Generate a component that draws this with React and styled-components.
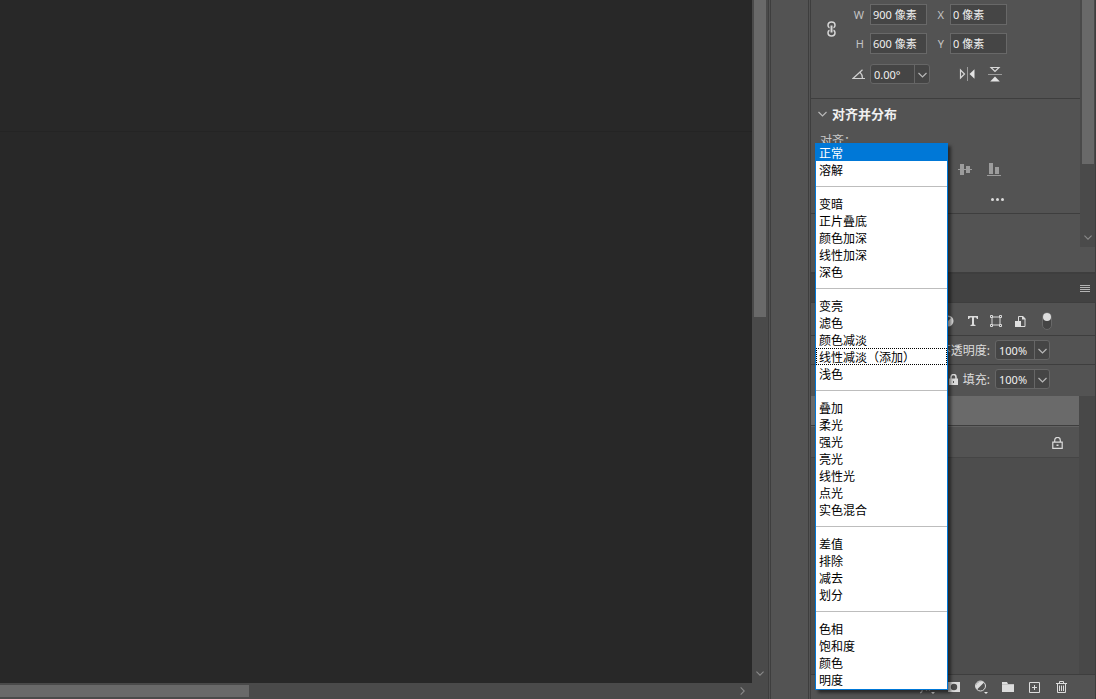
import React from 'react';
import styled, { createGlobalStyle, css } from 'styled-components';

const GlobalStyle = createGlobalStyle`
  * {
    box-sizing: border-box;
  }

  body {
    margin: 0;
    background: #535353;
    color: #dcdcdc;
    font-family: 'Noto Sans', 'Noto Sans CJK SC', sans-serif;
    font-size: 12px;
    overflow: hidden;
  }

  button,
  input,
  select {
    margin: 0;
    font-family: inherit;
    color: inherit;
  }

  svg {
    display: block;
    flex: none;
  }
`;

const Workspace = styled.main`
  display: flex;
  height: 100vh;
`;

const DocumentArea = styled.section`
  flex: 1;
  min-width: 0;
  display: grid;
  grid-template-columns: 1fr 16px;
  grid-template-rows: 1fr 16px;
  background: #4a4a4a;
`;

const Canvas = styled.div`
  background: #282828;
`;

const CanvasTop = styled.div`
  height: 132px;
  border-bottom: 1px solid #242424;
`;

const VerticalTrack = styled.div`
  display: flex;
  flex-direction: column;
  align-items: center;
  justify-content: space-between;
  width: ${(p) => p.$width};
  height: ${(p) => p.$height};
  padding-bottom: 6px;
  background: #4a4a4a;
`;

const VerticalThumb = styled.div`
  width: 12px;
  height: ${(p) => p.$length};
  background: #696969;
`;

const HorizontalTrack = styled.div`
  display: flex;
  align-items: center;
  justify-content: space-between;
  padding-right: 6px;
`;

const HorizontalThumb = styled.div`
  width: 249px;
  height: 12px;
  background: #696969;
`;

const Dock = styled.div`
  flex: none;
  width: 43px;
  background: #535353;
  border-left: 3px double #3e3e3e;
  border-right: 3px double #3e3e3e;
`;

const SidePanel = styled.aside`
  position: relative;
  flex: none;
  display: flex;
  flex-direction: column;
  width: 285px;
  border-right: 1px solid #3e3e3e;
`;

const Properties = styled.section`
  display: flex;
  height: 274px;
  border-bottom: 2px solid #3e3e3e;
`;

const PropertiesBody = styled.div`
  flex: 1;
`;

const Transform = styled.div`
  padding: 4px 0 14px;
  border-bottom: 1px solid #3e3e3e;
`;

const SizeGrid = styled.div`
  display: grid;
  grid-template-columns: 14px 20px 57px 11px 57px;
  grid-template-rows: 21px 21px;
  gap: 8px 6px;
  align-items: center;
  padding-left: 13px;
  padding-right: 1px;
`;

const LinkButton = styled.button`
  grid-row: 1 / 3;
  display: flex;
  justify-content: center;
  padding: 0;
  border: 0;
  background: none;
`;

const AxisLabel = styled.label`
  text-align: right;
  font-size: 11px;
  color: #c4c4c4;
`;

const Field = styled.input`
  width: 100%;
  height: 21px;
  padding: 0 2px 2px;
  border: 1px solid #686868;
  background: #454545;
  color: #f0f0f0;
  font-size: 11px;
  outline: none;
`;

const AngleRow = styled.div`
  display: flex;
  align-items: center;
  gap: 5px;
  margin-top: 10px;
  padding-left: 41px;
`;

const FlipGroup = styled.div`
  display: flex;
  align-items: center;
  gap: 10px;
  margin-left: 23px;
`;

const IconButton = styled.button`
  display: flex;
  align-items: center;
  justify-content: center;
  width: ${(p) => p.$width || '18px'};
  height: 20px;
  padding: 0;
  border: 0;
  background: none;
`;

const Combo = styled.div`
  display: flex;
  width: ${(p) => p.$width};
  height: 20px;
  border: 1px solid #666;
  border-radius: 3px;
  background: #454545;
`;

const ComboInput = styled.input`
  flex: 1;
  min-width: 0;
  padding: 0 3px;
  border: 0;
  background: none;
  color: #f0f0f0;
  font-size: 11px;
  outline: none;
`;

const ComboButton = styled.button`
  display: flex;
  align-items: center;
  justify-content: center;
  width: 15px;
  padding: 0;
  border: 0;
  border-left: 1px solid #666;
  background: none;
`;

const AlignSection = styled.div`
  padding-bottom: 2px;
  border-bottom: 1px solid #3e3e3e;
`;

const SectionTitle = styled.h2`
  display: flex;
  align-items: center;
  gap: 5px;
  height: 30px;
  margin: 0;
  padding: 0 0 2px 7px;
  font-size: 13px;
  font-weight: 700;
  color: #f0f0f0;
`;

const AlignLabel = styled.div`
  height: 24px;
  padding-left: 9px;
  line-height: 24px;
  color: #c8c8c8;
`;

const AlignRow = styled.div`
  display: flex;
  align-items: center;
  height: 34px;
  padding-left: 23px;
`;

const MoreRow = styled.div`
  display: flex;
  justify-content: flex-end;
  align-items: center;
  height: 24px;
  padding-right: 74px;
`;

const Layers = styled.section`
  flex: 1;
  min-height: 0;
  display: flex;
  flex-direction: column;
`;

const TabBar = styled.div`
  display: flex;
  align-items: center;
  justify-content: flex-end;
  height: 29px;
  padding-top: 2px;
  padding-right: 1px;
  background: #424242;
  border-bottom: 1px solid #3e3e3e;
`;

const OptionRow = styled.div`
  display: flex;
  align-items: center;
  justify-content: flex-end;
  gap: 5px;
  height: ${(p) => p.$height};
  padding: ${(p) => p.$padding};
  ${(p) =>
    p.$ruled &&
    css`
      border-bottom: 1px solid #3e3e3e;
    `}
`;

const LayerArea = styled.div`
  flex: 1;
  display: flex;
  background: #484848;
`;

const LayerList = styled.ul`
  flex: 1;
  margin: 0 16px 0 0;
  padding: 0;
  list-style: none;
  background: #4d4d4d;
`;

const LayerItem = styled.li`
  display: flex;
  align-items: center;
  justify-content: flex-end;
  height: 31px;
  padding: 2px 16px 0 0;
  border-bottom: 1px solid ${(p) => (p.$selected ? '#626262' : '#454545')};
  background: ${(p) => (p.$selected ? '#6a6a6a' : '#535353')};
  box-shadow: ${(p) => (p.$selected ? 'inset 0 -1px #3e3e3e' : 'none')};
`;

const Footer = styled.footer`
  display: flex;
  align-items: center;
  justify-content: flex-end;
  height: 25px;
  padding-right: 20px;
  border-top: 1px solid #3e3e3e;
`;

const BlendList = styled.select`
  position: absolute;
  top: 143px;
  left: 4px;
  width: 133px;
  height: 547px;
  padding: 0;
  border: 1px solid #0078d7;
  border-radius: 0;
  background: #fff;
  color: #000;
  font-family: 'Noto Sans CJK SC', sans-serif;
  font-size: 12px;
  overflow: hidden;
  outline: none;
  box-shadow: 3px 3px 3px rgba(0, 0, 0, 0.5);
`;

const BlendOption = styled.option`
  height: 17px;
  min-height: 17px;
  padding: 0 3px;
  line-height: 17px;
  color: ${(p) => (p.$hovered ? '#fff' : '#000')};
  background: ${(p) => (p.$hovered ? '#0078d7' : '#fff')};
  ${(p) =>
    p.$current &&
    css`
      outline: 1px dotted #000;
      outline-offset: -1px;
    `}
`;

const Separator = styled.option`
  height: 17px;
  min-height: 17px;
  padding: 0;
  background: linear-gradient(#bdbdbd, #bdbdbd) 0 8px / 100% 1px no-repeat;
`;

const blendGroups = [
  ['正常', '溶解'],
  ['变暗', '正片叠底', '颜色加深', '线性加深', '深色'],
  ['变亮', '滤色', '颜色减淡', '线性减淡（添加）', '浅色'],
  ['叠加', '柔光', '强光', '亮光', '线性光', '点光', '实色混合'],
  ['差值', '排除', '减去', '划分'],
  ['色相', '饱和度', '颜色', '明度'],
];

const Chevron = ({ color = '#b8b8b8', size = 9, right }) => (
  <svg width={size} height={size} viewBox="0 0 9 9" fill="none" stroke={color} strokeWidth="1.2">
    <path d={right ? 'M3 .5l4 4-4 4' : 'M.5 3l4 4 4-4'} />
  </svg>
);

const LinkIcon = () => (
  <svg width="9" height="16" viewBox="0 0 9 16" fill="none" stroke="#d8d8d8" strokeWidth="1.5">
    <path d="M2.5 6.7C1.2 6.2 1 5.4 1 4.2 1 2.2 2.3 1 4.5 1S8 2.2 8 4.2c0 1.2-.2 2-1.5 2.5M2.5 9.3C1.2 9.8 1 10.600 1 11.800 1 13.800 2.300 15 4.500 15S8 13.800 8 11.800c0-1.200-.2-2-1.500-2.500" />
    <path d="M4.500 4.500v7" strokeWidth="2" />
  </svg>
);

const AngleIcon = () => (
  <svg width="13" height="11" viewBox="0 0 13 11" fill="none" stroke="#d0d0d0" strokeWidth="1.2">
    <path d="M10.500.8L1 9.500h12M8 3.200c1.700 1.500 2.500 3.500 2.500 6.300" />
  </svg>
);

const FlipIcon = ({ vertical }) => (
  <svg width="16" height="16" viewBox="0 0 16 16">
    <g transform={vertical ? 'rotate(90 8 8)' : undefined}>
      <path d="M1.500 4v8l4-4z" fill="none" stroke="#d8d8d8" strokeWidth="1.200" />
      <path d="M15.500 3.200v9.600L10.500 8z" fill="#e4e4e4" />
      <path d="M8.500 1.500v13" stroke="#e4e4e4" strokeDasharray="1 1" />
    </g>
  </svg>
);

const AlignIcon = ({ kind }) => (
  <svg width="14" height="14" viewBox="0 0 14 14" fill="#9c9c9c">
    {kind === 'middle' && <path d="M2 1h4v5h2V3h4v3h2v1h-2v3H8V7H6v5H2V7H0V6h2z" />}
    {kind === 'bottom' && <path d="M2 0h4v11H2zM8 4h4v7H8zM0 12h14v1H0z" />}
    {kind === 'top' && <path d="M0 0h14v1H0zM2 2h4v11H2zM8 2h4v7H8z" />}
    {kind === 'left' && <path d="M0 0h1v14H0zM2 2h11v4H2zM2 8h7v4H2z" />}
    {kind === 'center' && <path d="M6 0h1v2h5v4H1V2h5zM3 8h7v4H7v2H6v-2H3z" />}
    {kind === 'right' && <path d="M13 0h1v14h-1zM1 2h11v4H1zM5 8h7v4H5z" />}
  </svg>
);

const MoreIcon = () => (
  <svg width="13" height="3" viewBox="0 0 13 3" fill="#dcdcdc">
    <circle cx="1.500" cy="1.500" r="1.500" />
    <circle cx="6.500" cy="1.500" r="1.500" />
    <circle cx="11.500" cy="1.500" r="1.500" />
  </svg>
);

const MenuIcon = () => (
  <svg width="10" height="8" viewBox="0 0 10 8" fill="#b4b4b4">
    <path d="M0 0h10v1H0zM0 2h10v1H0zM0 4h10v1H0zM0 6h10v1H0z" />
  </svg>
);

const HalfCircleIcon = () => (
  <svg width="12" height="12" viewBox="0 0 12 12">
    <circle cx="6" cy="6" r="5.500" fill="#dcdcdc" />
    <path d="M9 3A4.300 4.300 0 0 0 3 9z" fill="#555" />
  </svg>
);

const TypeIcon = () => (
  <svg width="10" height="10" viewBox="0 0 10 10" fill="#dcdcdc">
    <path d="M0 0h10v3H9L8 1.500H6V8.500l1.500.5v1h-5V9L4 8.500v-7H2L1 3H0z" />
  </svg>
);

const ShapeIcon = () => (
  <svg width="12" height="12" viewBox="0 0 12 12" fill="#535353" stroke="#dcdcdc">
    <path d="M2 2h8v8H2z" />
    <path d="M.5.5h2v2h-2zM9.500.5h2v2h-2zM.5 9.500h2v2h-2zM9.500 9.500h2v2h-2z" />
  </svg>
);

const SmartObjectIcon = () => (
  <svg width="11" height="13" viewBox="0 0 11 13">
    <path d="M3.500 6V1.500h4l2.500 2.500v7.500H6" fill="none" stroke="#dcdcdc" />
    <path d="M7 1v3.500h3.500V3.500L8 1z" fill="#dcdcdc" />
    <path d="M0 6h6v6H0z" fill="#e0e0e0" />
  </svg>
);

const FilterToggle = () => (
  <svg width="10" height="18" viewBox="0 0 10 18">
    <rect x=".5" y=".5" width="9" height="17" rx="4.500" fill="#444" stroke="#686868" />
    <circle cx="5" cy="5" r="4" fill="#dedede" />
  </svg>
);

const SolidLockIcon = () => (
  <svg width="9" height="11" viewBox="0 0 9 11">
    <path d="M2 5V3a2.500 2.500 0 0 1 5 0v2" fill="none" stroke="#dcdcdc" strokeWidth="1.500" />
    <path d="M0 4.500h9V11H0z" fill="#dcdcdc" />
    <path d="M4 7h1v2H4z" fill="#555" />
  </svg>
);

const LayerLockIcon = () => (
  <svg width="11" height="12" viewBox="0 0 11 12" fill="none" stroke="#dcdcdc">
    <path d="M2.700 5V3.200a2.800 2.800 0 0 1 5.600 0V5M.8 5.200h9.400v6.100H.8z" strokeWidth="1.200" />
    <path d="M4.500 7.500h2v1.500h-2z" fill="#dcdcdc" stroke="none" />
  </svg>
);

const MaskIcon = () => (
  <svg width="12" height="10" viewBox="0 0 12 10">
    <path d="M0 0h12v10H0z" fill="#dcdcdc" />
    <circle cx="6" cy="5" r="3.200" fill="#4d4d4d" />
  </svg>
);

const EffectsIcon = () => (
  <svg width="18" height="14" viewBox="0 0 18 14" fill="none" stroke="#b4b4b4" strokeWidth="1.300">
    <path d="M8 2C5.500 1 5.500 4 5 6l-1 5c-.3 1.200-1 1.700-2 1.500M3 5h4.500M8 6l4 4.500M12.500 6L8 10.500" />
    <path d="M13 12h4l-2 2z" fill="#e0e0e0" stroke="none" />
  </svg>
);

const AdjustmentIcon = () => (
  <svg width="14" height="16" viewBox="0 0 14 16">
    <circle cx="6.500" cy="7" r="5" fill="#525252" stroke="#dcdcdc" />
    <path d="M3 10.500A5 5 0 0 1 10 3.500z" fill="#dcdcdc" />
    <path d="M10 13h4l-2 2z" fill="#e6e6e6" />
  </svg>
);

const FolderIcon = () => (
  <svg width="12" height="10" viewBox="0 0 12 10" fill="#dcdcdc">
    <path d="M0 0h5l1 2h6v8H0z" />
    <path d="M0 2.500h12" stroke="#a8a8a8" strokeWidth=".5" />
  </svg>
);

const NewLayerIcon = () => (
  <svg width="11" height="11" viewBox="0 0 11 11" fill="none" stroke="#dcdcdc">
    <path d="M.5.5h10v10H.5zM5.500 3v5M3 5.500h5" />
  </svg>
);

const TrashIcon = () => (
  <svg width="11" height="12" viewBox="0 0 11 12" fill="none" stroke="#dcdcdc">
    <path d="M0 2.500h11M3.500 2V.5h4V2M1.500 3v8.500h8V3M3.500 4.500V10M5.500 4.500V10M7.500 4.500V10" />
  </svg>
);

function PercentField({ id, label }) {
  return (
    <>
      <label htmlFor={id}>{label}</label>
      <Combo $width="55px">
        <ComboInput id={id} defaultValue="100%" />
        <ComboButton aria-label={`${label} 100%`}>
          <Chevron />
        </ComboButton>
      </Combo>
    </>
  );
}

function BlendModeList() {
  return (
    <BlendList size={32} aria-label="正常">
      {blendGroups.map((group, i) => (
        <React.Fragment key={i}>
          {i > 0 && <Separator disabled />}
          {group.map((name) => (
            <BlendOption
              key={name}
              value={name}
              $hovered={name === '正常'}
              $current={name === '线性减淡（添加）'}
            >
              {name}
            </BlendOption>
          ))}
        </React.Fragment>
      ))}
    </BlendList>
  );
}

function PropertiesPanel() {
  return (
    <Properties>
      <PropertiesBody>
        <Transform>
          <SizeGrid>
            <LinkButton aria-label="W H">
              <LinkIcon />
            </LinkButton>
            <AxisLabel htmlFor="w">W</AxisLabel>
            <Field id="w" defaultValue="900 像素" />
            <AxisLabel htmlFor="x">X</AxisLabel>
            <Field id="x" defaultValue="0 像素" />
            <AxisLabel htmlFor="h">H</AxisLabel>
            <Field id="h" defaultValue="600 像素" />
            <AxisLabel htmlFor="y">Y</AxisLabel>
            <Field id="y" defaultValue="0 像素" />
          </SizeGrid>
          <AngleRow>
            <label htmlFor="angle">
              <AngleIcon />
            </label>
            <Combo $width="60px">
              <ComboInput id="angle" defaultValue="0.00°" />
              <ComboButton aria-label="0.00°">
                <Chevron />
              </ComboButton>
            </Combo>
            <FlipGroup>
              <IconButton aria-label="X">
                <FlipIcon />
              </IconButton>
              <IconButton aria-label="Y">
                <FlipIcon vertical />
              </IconButton>
            </FlipGroup>
          </AngleRow>
        </Transform>
        <AlignSection>
          <SectionTitle>
            <Chevron />
            对齐并分布
          </SectionTitle>
          <AlignLabel>对齐：</AlignLabel>
          <AlignRow>
            {['left', 'center', 'right', 'top', 'middle', 'bottom'].map((kind) => (
              <IconButton key={kind} $width="29px" aria-label={kind}>
                <AlignIcon kind={kind} />
              </IconButton>
            ))}
          </AlignRow>
          <MoreRow>
            <IconButton aria-label="more">
              <MoreIcon />
            </IconButton>
          </MoreRow>
        </AlignSection>
      </PropertiesBody>
      <VerticalTrack $width="15px" $height="247px">
        <VerticalThumb $length="164px" />
        <Chevron color="#8a8a8a" size={8} />
      </VerticalTrack>
    </Properties>
  );
}

function LayersPanel() {
  return (
    <Layers>
      <TabBar>
        <IconButton aria-label="menu">
          <MenuIcon />
        </IconButton>
      </TabBar>
      <OptionRow $height="33px" $padding="4px 36px 0 0" $ruled>
        <IconButton aria-label="adjustment" $width="22px">
          <HalfCircleIcon />
        </IconButton>
        <IconButton aria-label="type">
          <TypeIcon />
        </IconButton>
        <IconButton aria-label="shape">
          <ShapeIcon />
        </IconButton>
        <IconButton aria-label="smart object" $width="20px">
          <SmartObjectIcon />
        </IconButton>
        <IconButton aria-label="filter" $width="24px">
          <FilterToggle />
        </IconButton>
      </OptionRow>
      <OptionRow $height="29px" $padding="0 45px 0 0" $ruled>
        <PercentField id="opacity" label="不透明度:" />
      </OptionRow>
      <OptionRow $height="31px" $padding="0 45px 3px 0">
        <SolidLockIcon />
        <PercentField id="fill" label="填充:" />
      </OptionRow>
      <LayerArea>
        <LayerList>
          <LayerItem $selected />
          <LayerItem>
            <LayerLockIcon />
          </LayerItem>
        </LayerList>
      </LayerArea>
      <Footer>
        {[EffectsIcon, MaskIcon, AdjustmentIcon, FolderIcon, NewLayerIcon, TrashIcon].map((Icon, i) => (
          <IconButton key={i} $width="27px" aria-label={Icon.name}>
            <Icon />
          </IconButton>
        ))}
      </Footer>
    </Layers>
  );
}

function App() {
  return (
    <>
      <GlobalStyle />
      <Workspace>
        <DocumentArea>
          <Canvas>
            <CanvasTop />
          </Canvas>
          <VerticalTrack $width="16px" $height="100%">
            <VerticalThumb $length="317px" />
            <Chevron color="#8a8a8a" size={8} />
          </VerticalTrack>
          <HorizontalTrack>
            <HorizontalThumb />
            <Chevron color="#8a8a8a" size={8} right />
          </HorizontalTrack>
        </DocumentArea>
        <Dock />
        <SidePanel>
          <PropertiesPanel />
          <LayersPanel />
          <BlendModeList />
        </SidePanel>
      </Workspace>
    </>
  );
}

export default App;
